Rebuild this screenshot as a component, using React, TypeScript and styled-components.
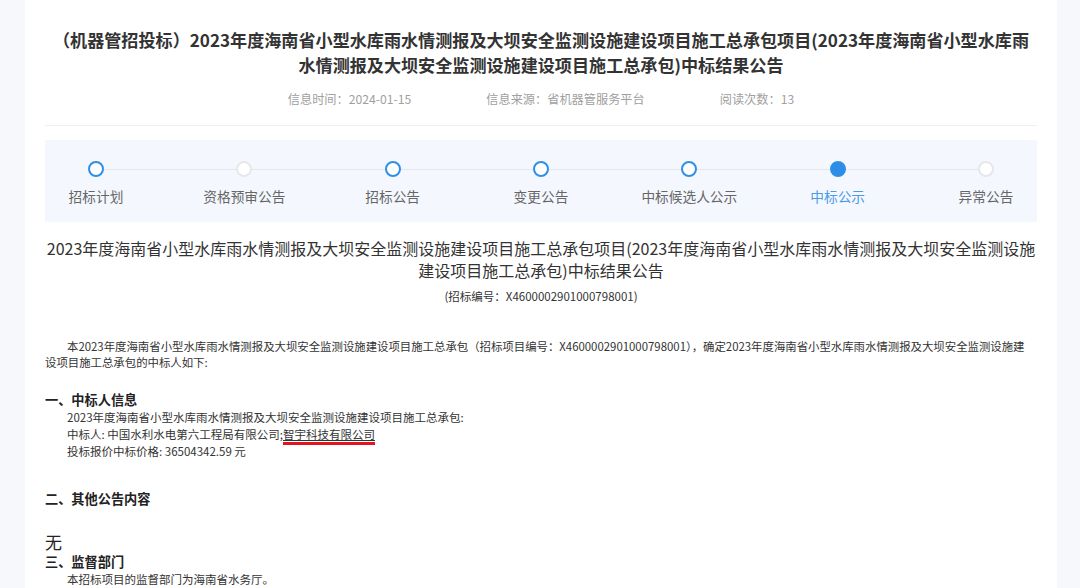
import React from 'react';
import styled, { createGlobalStyle } from 'styled-components';

const GlobalStyle = createGlobalStyle`
  html, body {
    margin: 0;
    padding: 0;
    overflow: hidden;
    background: #f7f8fb;
  }
  body {
    font-family: "Noto Sans CJK SC", "Noto Sans", "Liberation Sans", sans-serif;
    color: #333;
  }
`;

const Card = styled.div`
  width: 1032px;
  margin-left: 25px;
  min-height: 100vh;
  background: #fff;
  box-sizing: border-box;
  padding: 27px 20px 0;
`;

const Title = styled.h1`
  margin: 0;
  font-size: 17.1px;
  line-height: 25px;
  font-weight: 700;
  text-align: center;
  white-space: nowrap;
  color: #333;
`;

const Meta = styled.div`
  display: flex;
  justify-content: center;
  gap: 75px;
  margin-top: 12px;
  padding-bottom: 16px;
  border-bottom: 1px solid #eeeeee;
  font-size: 12.2px;
  line-height: 20px;
  color: #a0a0a0;
`;

const StepPanel = styled.div`
  margin-top: 14px;
  height: 82px;
  box-sizing: border-box;
  padding-top: 21px;
  background: #f4f8fe;
`;

const StepList = styled.ol`
  position: relative;
  display: flex;
  justify-content: space-between;
  margin: 0;
  padding: 0;
  list-style: none;

  &::before {
    content: '';
    position: absolute;
    top: 8px;
    left: 51px;
    right: 51px;
    height: 1px;
    background: #e3e6eb;
  }
`;

const Step = styled.li`
  position: relative;
  width: 102px;
  display: flex;
  flex-direction: column;
  align-items: center;
`;

type StepState = 'done' | 'none' | 'active';

const Dot = styled.span<{ $state: StepState }>`
  width: 16px;
  height: 16px;
  box-sizing: border-box;
  border-radius: 50%;
  background: ${(p) => (p.$state === 'active' ? '#2b8de6' : '#fff')};
  border: 2px solid
    ${(p) => (p.$state === 'none' ? '#e6e7ea' : '#2f8fe6')};
`;

const StepLabel = styled.span<{ $active: boolean }>`
  margin-top: 9px;
  font-size: 13.7px;
  line-height: 20px;
  white-space: nowrap;
  color: ${(p) => (p.$active ? '#4a9ae8' : '#666')};
`;

const SubTitle = styled.h2`
  margin: 15px 0 0;
  font-size: 16px;
  line-height: 22px;
  font-weight: 400;
  text-align: center;
  white-space: nowrap;
  color: #333;
`;

const Code = styled.div`
  margin-top: 6px;
  font-size: 11.5px;
  line-height: 18px;
  text-align: center;
  color: #333;
`;

const Para = styled.p`
  margin: 33px 0 0;
  font-size: 11.4px;
  line-height: 16px;
  text-indent: 22px;
  white-space: nowrap;
  color: #333;
`;

const Heading = styled.h3<{ $gap: number }>`
  margin: ${(p) => p.$gap}px 0 0;
  font-size: 13.2px;
  line-height: 18px;
  font-weight: 700;
  color: #222;
`;

const Lines = styled.div`
  padding-left: 22px;
  font-size: 11.5px;
  line-height: 17px;
  color: #333;
`;

const Marked = styled.span`
  text-decoration: underline;
  text-underline-offset: 1px;
  border-bottom: 3px solid #e3161f;
`;

const Nothing = styled.div`
  margin-top: 23px;
  font-size: 17px;
  line-height: 22px;
  color: #222;
`;

const steps: { label: string; state: StepState }[] = [
  { label: '招标计划', state: 'done' },
  { label: '资格预审公告', state: 'none' },
  { label: '招标公告', state: 'done' },
  { label: '变更公告', state: 'done' },
  { label: '中标候选人公示', state: 'done' },
  { label: '中标公示', state: 'active' },
  { label: '异常公告', state: 'none' },
];

export default function App() {
  return (
    <>
      <GlobalStyle />
      <Card>
        <Title>
          （机器管招投标）2023年度海南省小型水库雨水情测报及大坝安全监测设施建设项目施工总承包项目(2023年度海南省小型水库雨
          <br />
          水情测报及大坝安全监测设施建设项目施工总承包)中标结果公告
        </Title>
        <Meta>
          <span>信息时间：2024-01-15</span>
          <span>信息来源：省机器管服务平台</span>
          <span>阅读次数：13</span>
        </Meta>

        <StepPanel>
          <StepList>
            {steps.map((s) => (
              <Step key={s.label}>
                <Dot $state={s.state} />
                <StepLabel $active={s.state === 'active'}>{s.label}</StepLabel>
              </Step>
            ))}
          </StepList>
        </StepPanel>

        <SubTitle>
          2023年度海南省小型水库雨水情测报及大坝安全监测设施建设项目施工总承包项目(2023年度海南省小型水库雨水情测报及大坝安全监测设施
          <br />
          建设项目施工总承包)中标结果公告
        </SubTitle>
        <Code>(招标编号：X4600002901000798001)</Code>

        <Para>
          本2023年度海南省小型水库雨水情测报及大坝安全监测设施建设项目施工总承包（招标项目编号：X4600002901000798001），确定2023年度海南省小型水库雨水情测报及大坝安全监测设施建
          <br />
          设项目施工总承包的中标人如下:
        </Para>

        <Heading $gap={21}>一、中标人信息</Heading>
        <Lines>
          <div>2023年度海南省小型水库雨水情测报及大坝安全监测设施建设项目施工总承包:</div>
          <div>
            中标人: 中国水利水电第六工程局有限公司;<Marked>智宇科技有限公司</Marked>
          </div>
          <div>投标报价中标价格: 36504342.59 元</div>
        </Lines>

        <Heading $gap={30}>二、其他公告内容</Heading>
        <Nothing>无</Nothing>
        <Heading $gap={0}>三、监督部门</Heading>
        <Lines>
          <div>本招标项目的监督部门为海南省水务厅。</div>
        </Lines>
      </Card>
    </>
  );
}
